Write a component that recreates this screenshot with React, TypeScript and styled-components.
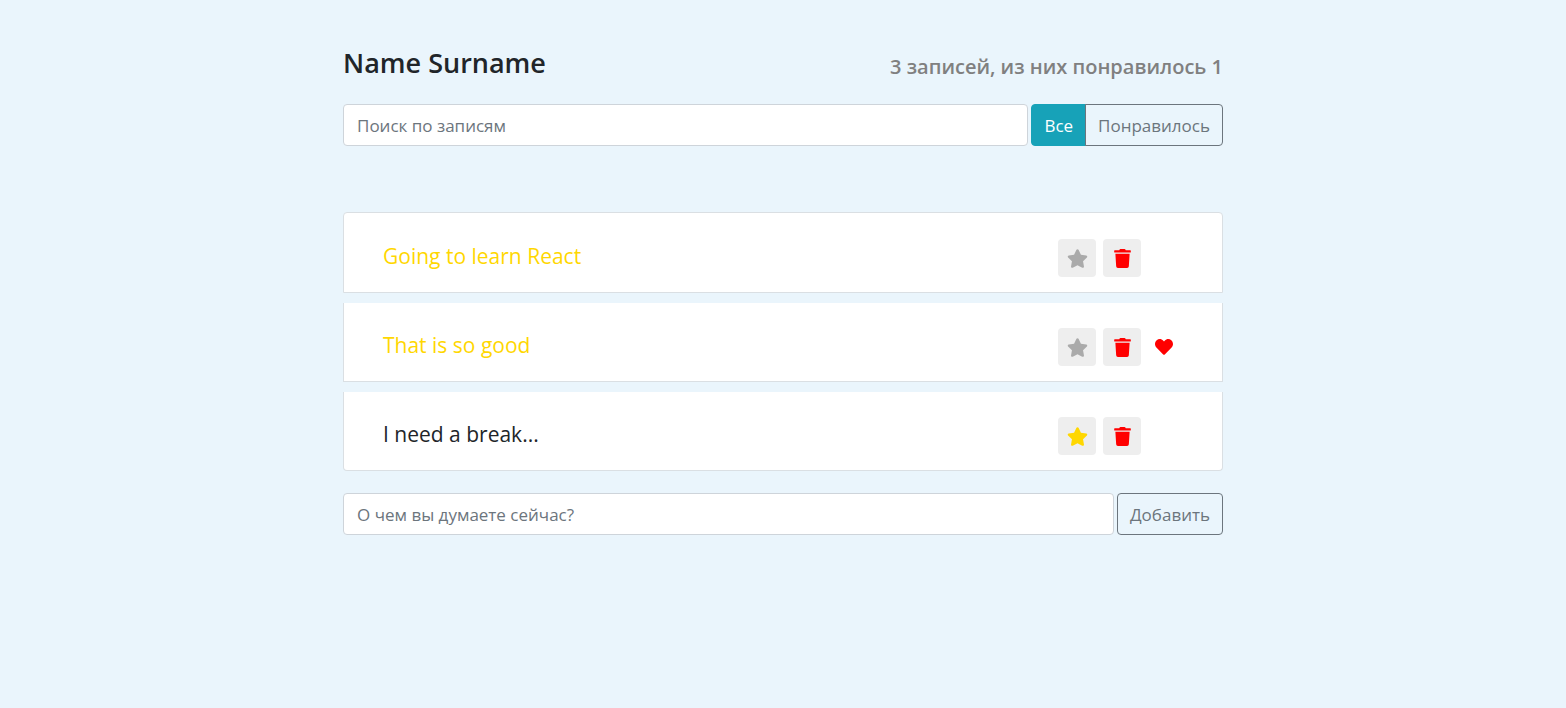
import React, { useState } from "react";
import styled, { createGlobalStyle } from "styled-components";
import { FaHeart, FaStar, FaTrash } from "react-icons/fa";

const GlobalStyle = createGlobalStyle`
  *, *::before, *::after { box-sizing: border-box; }
  body {
    margin: 0;
    background: #eaf5fc;
    color: #212529;
    font-family: "Segoe UI", "Open Sans", "Noto Sans", sans-serif;
    font-size: 17px;
    line-height: 26px;
  }
  button, input { font: inherit; }
`;

const Page = styled.main`
  max-width: 880px;
  margin: 0 auto;
`;

const Header = styled.header`
  display: flex;
  align-items: flex-end;
  justify-content: space-between;
  padding: 45px 0 23px;
`;

const Title = styled.h1`
  margin: 0;
  font-size: 27px;
  line-height: 36px;
  font-weight: 600;
`;

const Summary = styled.h2`
  margin: 0;
  font-size: 20px;
  line-height: 28px;
  font-weight: 600;
  color: #808080;
`;

const Bar = styled.form`
  display: flex;
  gap: 3px;
`;

const TextField = styled.input`
  flex: 1;
  min-width: 0;
  height: 42px;
  padding: 6px 13px;
  border: 1px solid #ced4da;
  border-radius: 4px;
  background: #fff;
  color: #495057;
  &::placeholder { color: #6c757d; opacity: 1; }
`;

const OutlineButton = styled.button`
  height: 42px;
  padding: 8px 12px 6px;
  border: 1px solid #6c757d;
  border-radius: 4px;
  background: transparent;
  color: #6c757d;
  cursor: pointer;
`;

const ButtonGroup = styled.div`
  display: flex;
`;

const FilterButton = styled(OutlineButton)<{ $active: boolean }>`
  border-color: ${(p) => (p.$active ? "#17a2b8" : "#6c757d")};
  background: ${(p) => (p.$active ? "#17a2b8" : "transparent")};
  color: ${(p) => (p.$active ? "#fff" : "#6c757d")};
  &:first-child { border-radius: 4px 0 0 4px; }
  &:last-child { border-radius: 0 4px 4px 0; margin-left: -1px; }
`;

const List = styled.ul`
  display: flex;
  flex-direction: column;
  gap: 10px;
  margin: 66px 0 22px;
  padding: 0;
  list-style: none;
`;

const Item = styled.li`
  display: flex;
  align-items: center;
  justify-content: space-between;
  height: 79px;
  padding: 10px 42px 0 39px;
  border: 1px solid #dadfe3;
  border-top-width: 0;
  background: #fff;
  &:first-child { height: 81px; border-top-width: 1px; border-radius: 4px 4px 0 0; }
  &:last-child { border-radius: 0 0 4px 4px; }
`;

const ItemText = styled.span<{ $important: boolean }>`
  font-size: 21px;
  line-height: 32px;
  padding-bottom: 4px;
  color: ${(p) => (p.$important ? "#ffd700" : "#212529")};
`;

const Actions = styled.div`
  display: flex;
  align-items: center;
  gap: 7px;
`;

const IconButton = styled.button<{ $color: string }>`
  display: grid;
  place-items: center;
  width: 38px;
  height: 38px;
  padding: 1px 0 0;
  border: 0;
  border-radius: 4px;
  background: #eee;
  color: ${(p) => p.$color};
  cursor: pointer;
`;

const HeartSlot = styled.span`
  display: grid;
  place-items: center;
  width: 32px;
  height: 38px;
  color: #f00;
`;

type Post = { id: number; text: string; important: boolean; like: boolean };

const initialPosts: Post[] = [
  { id: 1, text: "Going to learn React", important: true, like: false },
  { id: 2, text: "That is so good", important: true, like: true },
  { id: 3, text: "I need a break...", important: false, like: false },
];

export default function App() {
  const [posts, setPosts] = useState(initialPosts);
  const [term, setTerm] = useState("");
  const [filter, setFilter] = useState<"all" | "like">("all");
  const [draft, setDraft] = useState("");

  const toggle = (id: number, key: "important" | "like") =>
    setPosts(posts.map((p) => (p.id === id ? { ...p, [key]: !p[key] } : p)));

  const addPost = (e: React.FormEvent) => {
    e.preventDefault();
    if (!draft.trim()) return;
    setPosts([...posts, { id: Date.now(), text: draft, important: false, like: false }]);
    setDraft("");
  };

  const visible = posts.filter((p) => p.text.includes(term) && (filter === "all" || p.like));

  return (
    <Page>
      <GlobalStyle />
      <Header>
        <Title>Name Surname</Title>
        <Summary>{`${posts.length} записей, из них понравилось ${posts.filter((p) => p.like).length}`}</Summary>
      </Header>
      <Bar onSubmit={(e) => e.preventDefault()}>
        <TextField
          type="text"
          aria-label="Поиск по записям"
          placeholder="Поиск по записям"
          value={term}
          onChange={(e) => setTerm(e.target.value)}
        />
        <ButtonGroup>
          <FilterButton type="button" $active={filter === "all"} onClick={() => setFilter("all")}>
            Все
          </FilterButton>
          <FilterButton type="button" $active={filter === "like"} onClick={() => setFilter("like")}>
            Понравилось
          </FilterButton>
        </ButtonGroup>
      </Bar>
      <List>
        {visible.map((p) => (
          <Item key={p.id}>
            <ItemText $important={p.important} onClick={() => toggle(p.id, "like")}>
              {p.text}
            </ItemText>
            <Actions>
              <IconButton
                type="button"
                aria-label="Важное"
                $color={p.important ? "#aaa" : "#ffd700"}
                onClick={() => toggle(p.id, "important")}
              >
                <FaStar size={21} />
              </IconButton>
              <IconButton
                type="button"
                aria-label="Удалить"
                $color="#f00"
                onClick={() => setPosts(posts.filter((o) => o.id !== p.id))}
              >
                <FaTrash size={19} />
              </IconButton>
              <HeartSlot>{p.like && <FaHeart size={18} />}</HeartSlot>
            </Actions>
          </Item>
        ))}
      </List>
      <Bar onSubmit={addPost}>
        <TextField
          type="text"
          aria-label="О чем вы думаете сейчас?"
          placeholder="О чем вы думаете сейчас?"
          value={draft}
          onChange={(e) => setDraft(e.target.value)}
        />
        <OutlineButton type="submit">Добавить</OutlineButton>
      </Bar>
    </Page>
  );
}
